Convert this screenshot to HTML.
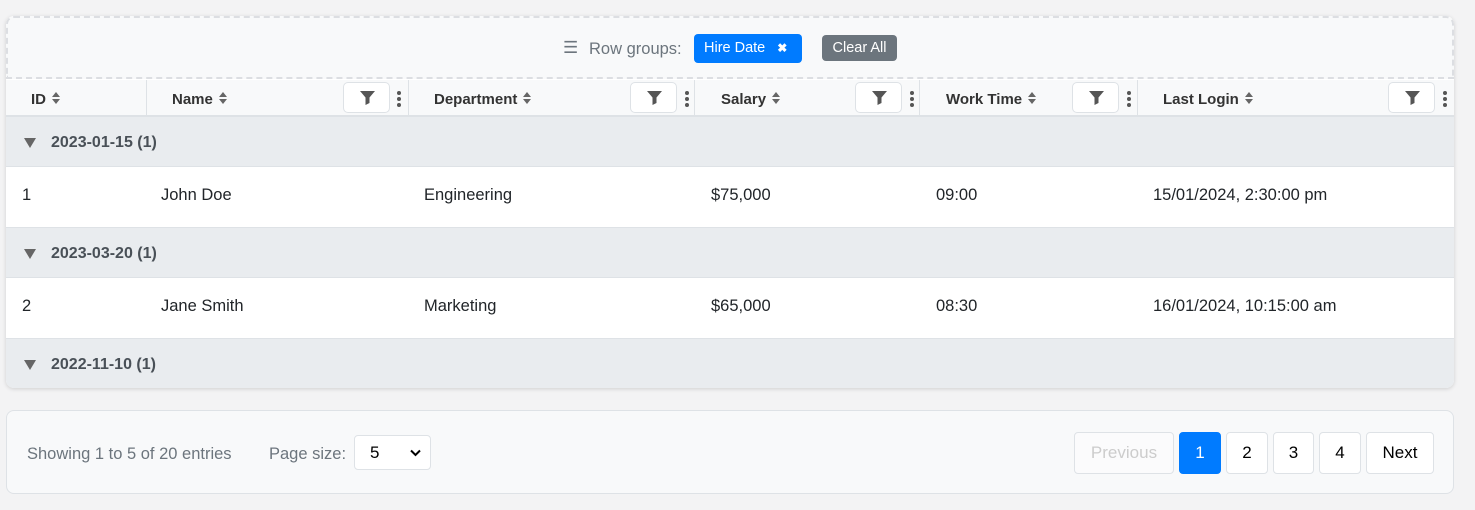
<!DOCTYPE html>
<html><head><meta charset="utf-8"><style>
*{box-sizing:border-box;margin:0;padding:0}
body{width:1475px;height:510px;background:#f3f3f4;font-family:"Liberation Sans",sans-serif;position:relative;overflow:hidden}
.card{position:absolute;left:6px;top:16px;width:1448px;height:372px;background:#fff;border-radius:8px;box-shadow:0 1px 4px rgba(0,0,0,.15);overflow:hidden}
.gp{position:absolute;left:0;top:0;width:1448px;height:63px;background:#f8f9fa;border:2px dashed #dcdee2;border-radius:8px 8px 0 0}
.abs{position:absolute;white-space:nowrap}
.hdr{position:absolute;left:0;top:64px;width:1448px;height:37px;background:#f8f9fa;border-bottom:2px solid #dee2e6}
.hc{position:absolute;top:0;height:37px;border-right:1px solid #dee2e6}
.ht{position:absolute;top:11px;font-size:15px;font-weight:bold;color:#333}
.ht svg{vertical-align:-1px;margin-left:5px}
.fb{position:absolute;top:2px;width:47px;height:31px;border:1px solid #dee2e6;border-radius:5px;background:#fff}
.dots{position:absolute;top:10px}
.grp{position:absolute;left:0;width:1448px;height:50px;background:#e9ecef;border-bottom:1px solid #dee2e6}
.grp span{position:absolute;left:45px;top:17px;font-size:16px;font-weight:bold;color:#495057}
.tri{position:absolute;left:18px;top:21px;width:0;height:0;border-left:6px solid transparent;border-right:6px solid transparent;border-top:10px solid #666}
.row{position:absolute;left:0;width:1448px;height:61px;background:#fff;border-bottom:1px solid #dee2e6;font-size:16.5px;color:#212529}
.row span{position:absolute;top:19px}
.foot{position:absolute;left:6px;top:410px;width:1448px;height:84px;background:#f8f9fa;border:1px solid #dee2e6;border-radius:8px}
.pb{position:absolute;top:21px;height:42px;border:1px solid #dee2e6;border-radius:4px;background:#fff;font-size:17px;text-align:center;line-height:40px;color:#000}
</style></head><body>
<svg width="0" height="0" style="position:absolute"><defs>
<symbol id="s" viewBox="0 0 10 14"><path d="M1 6L5 1L9 6Z M1 8L5 13L9 8Z" fill="#666"/></symbol>
<symbol id="f" viewBox="0 0 47 29"><path d="M16 8h15l-5.5 6.5v5.5l-4 2v-7.5z" fill="#555"/></symbol>
<symbol id="d" viewBox="0 0 6 18"><circle cx="3" cy="3" r="2" fill="#555"/><circle cx="3" cy="9" r="2" fill="#555"/><circle cx="3" cy="15" r="2" fill="#555"/></symbol>
</defs></svg>
<div class="card">
 <div class="gp">
  <div class="abs" style="left:555px;top:20px;font-size:17px;color:#6c757d">☰</div>
  <div class="abs" style="left:581px;top:22px;font-size:16.5px;color:#6c757d">Row groups:</div>
  <div class="abs" style="left:686px;top:16px;width:108px;height:29px;background:#007bff;border-radius:4px;color:#fff;font-size:14.5px;line-height:29px;padding-left:10px">Hire Date <span style="margin-left:8px;font-weight:bold;font-size:12px">✖</span></div>
  <div class="abs" style="left:814px;top:17px;width:75px;height:26px;background:#6c757d;border-radius:4px;color:#fff;font-size:14.5px;line-height:26px;text-align:center">Clear All</div>
 </div>
 <div class="hdr">
  <div class="hc" style="left:0;width:141px"><div class="ht" style="left:25px">ID<svg width="10" height="14"><use href="#s"/></svg></div></div>
  <div class="hc" style="left:141px;width:262px"><div class="ht" style="left:25px">Name<svg width="10" height="14"><use href="#s"/></svg></div><div class="fb" style="left:196px"><svg width="47" height="29"><use href="#f"/></svg></div><svg class="dots" style="left:249px" width="6" height="18"><use href="#d"/></svg></div>
  <div class="hc" style="left:403px;width:286px"><div class="ht" style="left:25px">Department<svg width="10" height="14"><use href="#s"/></svg></div><div class="fb" style="left:221px"><svg width="47" height="29"><use href="#f"/></svg></div><svg class="dots" style="left:275px" width="6" height="18"><use href="#d"/></svg></div>
  <div class="hc" style="left:689px;width:225px"><div class="ht" style="left:26px">Salary<svg width="10" height="14"><use href="#s"/></svg></div><div class="fb" style="left:160px"><svg width="47" height="29"><use href="#f"/></svg></div><svg class="dots" style="left:214px" width="6" height="18"><use href="#d"/></svg></div>
  <div class="hc" style="left:914px;width:218px"><div class="ht" style="left:26px">Work Time<svg width="10" height="14"><use href="#s"/></svg></div><div class="fb" style="left:152px"><svg width="47" height="29"><use href="#f"/></svg></div><svg class="dots" style="left:206px" width="6" height="18"><use href="#d"/></svg></div>
  <div class="hc" style="left:1132px;width:316px;border:none"><div class="ht" style="left:25px">Last Login<svg width="10" height="14"><use href="#s"/></svg></div><div class="fb" style="left:250px"><svg width="47" height="29"><use href="#f"/></svg></div><svg class="dots" style="left:304px" width="6" height="18"><use href="#d"/></svg></div>
 </div>
 <div class="grp" style="top:101px"><div class="tri"></div><span>2023-01-15 (1)</span></div>
 <div class="row" style="top:151px"><span style="left:16px">1</span><span style="left:155px">John Doe</span><span style="left:418px">Engineering</span><span style="left:705px">$75,000</span><span style="left:930px">09:00</span><span style="left:1147px">15/01/2024, 2:30:00 pm</span></div>
 <div class="grp" style="top:212px"><div class="tri"></div><span>2023-03-20 (1)</span></div>
 <div class="row" style="top:262px"><span style="left:16px">2</span><span style="left:155px">Jane Smith</span><span style="left:418px">Marketing</span><span style="left:705px">$65,000</span><span style="left:930px">08:30</span><span style="left:1147px">16/01/2024, 10:15:00 am</span></div>
 <div class="grp" style="top:323px"><div class="tri"></div><span>2022-11-10 (1)</span></div>
</div>
<div class="foot">
 <div class="abs" style="left:20px;top:34px;font-size:16.5px;color:#6c757d">Showing 1 to 5 of 20 entries</div>
 <div class="abs" style="left:262px;top:34px;font-size:16.5px;color:#6c757d">Page size:</div>
 <div class="abs" style="left:347px;top:24px;width:77px;height:35px;background:#fff;border:1px solid #dee2e6;border-radius:4px;font-size:17px;line-height:33px;padding-left:15px">5<svg style="position:absolute;right:9px;top:13px" width="11" height="8"><path d="M1 1.5L5.5 6L10 1.5" stroke="#000" stroke-width="2" fill="none"/></svg></div>
 <div class="pb" style="left:1067px;width:100px;background:#fbfbfc;color:#ccc">Previous</div>
 <div class="pb" style="left:1172px;width:42px;background:#007bff;border-color:#007bff;color:#fff">1</div>
 <div class="pb" style="left:1219px;width:42px">2</div>
 <div class="pb" style="left:1266px;width:41px">3</div>
 <div class="pb" style="left:1312px;width:42px">4</div>
 <div class="pb" style="left:1359px;width:68px">Next</div>
</div>
</body></html>
